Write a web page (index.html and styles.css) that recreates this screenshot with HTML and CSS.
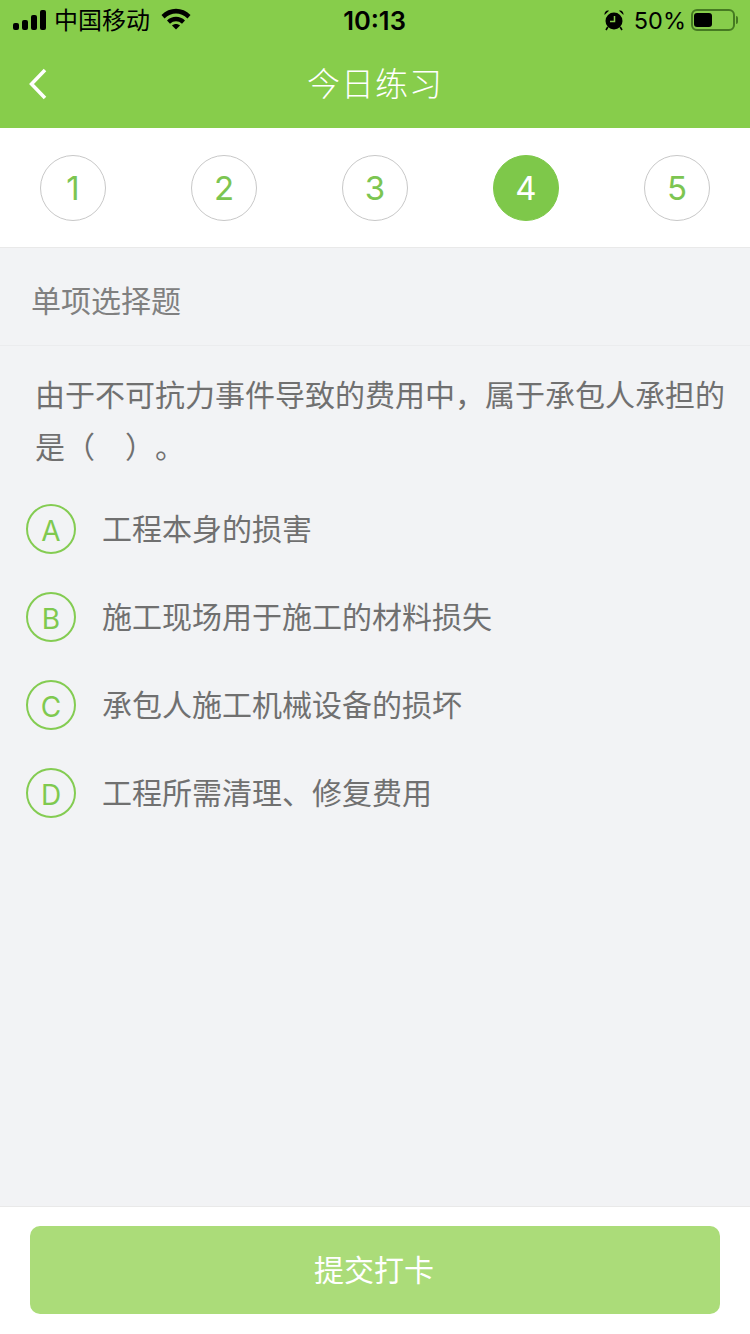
FILE: index.html
```html
<!DOCTYPE html>
<html lang="zh-CN">
  <head>
    <meta charset="UTF-8" />
    <meta name="viewport" content="width=device-width, initial-scale=1.0" />
    <title>今日练习</title>
    <link rel="stylesheet" href="styles.css">
  </head>

  <body>
    <div class="page">
      <div class="header">
        <div class="status-bar">
          <div class="status-left">
            <div class="signal">
              <span class="s1"></span><span class="s2"></span><span class="s3"></span><span class="s4"></span>
            </div>
            <span class="carrier">中国移动</span>
            <svg class="wifi" width="30" height="22" viewBox="0 0 30 22">
              <path d="M0.500 7 C8.500 -1.500 21.500 -1.500 29.500 7 L26.500 10.400 C19.500 3.800 10.500 3.800 3.500 10.400 Z" fill="#000" />
              <path d="M6 12.500 C11 7.500 19 7.500 24 12.500 L21 15.800 C17.500 12.500 12.500 12.500 9 15.800 Z" fill="#000" />
              <path d="M11 17.600 C13.400 15.600 16.600 15.600 19 17.600 L15 21.500 Z" fill="#000" />
            </svg>
          </div>
          <span class="clock">10:13</span>
          <div class="status-right">
            <svg class="alarm" width="22" height="22" viewBox="0 0 22 22">
              <circle cx="11" cy="12" r="8.500" fill="#000" />
              <path d="M11.500 7 V12.500 H7" stroke="#87cd4b" stroke-width="1.500" fill="none" />
              <path d="M1.500 6 L6 1.800 C4 0.800 1.200 2.500 1.500 6 Z M20.500 6 L16 1.800 C18 0.800 20.800 2.500 20.500 6 Z" fill="#000" />
              <path d="M4.800 18 L3 21 M17.200 18 L19 21" stroke="#000" stroke-width="1.600" />
            </svg>
            <span class="percent">50%</span>
            <div class="battery"><div class="battery-level"></div></div>
            <div class="battery-tip"></div>
          </div>
        </div>
        <div class="nav-bar">
          <svg class="back" width="20" height="32" viewBox="0 0 20 32">
            <path d="M17 2 L3.500 16 L17 30" stroke="#fff" stroke-width="3.500" fill="none" />
          </svg>
          <span class="nav-title">今日练习</span>
        </div>
      </div>

      <div class="steps">
        <div class="step">1</div>
        <div class="step">2</div>
        <div class="step">3</div>
        <div class="step active">4</div>
        <div class="step">5</div>
      </div>

      <div class="section-title">单项选择题</div>

      <div class="content">
        <p class="question">由于不可抗力事件导致的费用中，属于承包人承担的是（　）。</p>
        <div class="option"><span class="letter">A</span><span class="option-text">工程本身的损害</span></div>
        <div class="option"><span class="letter">B</span><span class="option-text">施工现场用于施工的材料损失</span></div>
        <div class="option"><span class="letter">C</span><span class="option-text">承包人施工机械设备的损坏</span></div>
        <div class="option"><span class="letter">D</span><span class="option-text">工程所需清理、修复费用</span></div>
      </div>

      <div class="footer">
        <button class="submit">提交打卡</button>
      </div>
    </div>
  </body>
</html>
```

FILE: styles.css
```css
* {
  box-sizing: border-box;
}

body {
  margin: 0;
  font-family: "Liberation Sans", "Noto Sans CJK SC", sans-serif;
  background-color: #f2f3f5;
}

.page {
  display: flex;
  flex-direction: column;
  width: 750px;
  height: 1334px;
  overflow: hidden;
}

/* Green top area */
.header {
  height: 128px;
  background-color: #87cd4b;
}

.status-bar {
  display: flex;
  align-items: center;
  justify-content: space-between;
  height: 40px;
  padding: 0 12px 0 13px;
  color: #000;
}

.status-left,
.status-right {
  display: flex;
  align-items: center;
  width: 260px;
}

.status-right {
  justify-content: flex-end;
}

.signal {
  display: flex;
  align-items: flex-end;
  gap: 3px;
  height: 20px;
}

.signal span {
  width: 6px;
  background-color: #000;
  border-radius: 2px;
}

.signal .s1 { height: 7px; }
.signal .s2 { height: 10px; }
.signal .s3 { height: 15px; }
.signal .s4 { height: 20px; }

.carrier {
  margin: -3px 0 0 8px;
  font-size: 24px;
}

.wifi {
  margin: -2px 0 0 11px;
}

.clock {
  margin-right: 2px;
  font-family: Inter, sans-serif;
  font-size: 25.500px;
  font-weight: 600;
}

.percent {
  margin-left: 9px;
  font-family: Inter, sans-serif;
  font-size: 23.500px;
  font-weight: 400;
}

.battery {
  width: 44px;
  height: 22px;
  margin-left: 5px;
  padding: 2px 1px;
  border: 2px solid #467a22;
  border-radius: 6px;
}

.battery-level {
  width: 18px;
  height: 100%;
  background-color: #000;
  border-radius: 3px;
}

.battery-tip {
  width: 2px;
  height: 8px;
  margin-left: 1px;
  background-color: #467a22;
  border-radius: 0 2px 2px 0;
}

.nav-bar {
  display: flex;
  align-items: center;
  justify-content: center;
  position: relative;
  height: 88px;
}

.back {
  position: absolute;
  left: 28px;
  top: 28px;
}

.nav-title {
  margin-top: -4px;
  color: #fff;
  font-size: 33px;
  font-weight: 300;
  letter-spacing: 1px;
}

/* Question number row */
.steps {
  display: flex;
  align-items: center;
  justify-content: space-between;
  height: 120px;
  padding: 0 40px;
  background-color: #fff;
  border-bottom: 1px solid #e9e9e9;
}

.step {
  display: flex;
  align-items: center;
  justify-content: center;
  width: 66px;
  height: 66px;
  color: #7cc551;
  font-family: Inter, sans-serif;
  font-size: 33px;
  font-weight: 400;
  border: 1px solid #c8c8c8;
  border-radius: 50%;
}

.step.active {
  color: #fff;
  background-color: #7ec84a;
  border-color: #7ec84a;
}

.section-title {
  height: 98px;
  padding: 36px 0 0 31px;
  color: #808080;
  font-size: 30px;
  line-height: 36px;
  border-bottom: 1px solid #ebecee;
}

.content {
  flex: 1;
  padding: 24px 0 0 26px;
}

.question {
  margin: 0 0 30px;
  padding: 0 20px 0 9px;
  color: #707070;
  font-size: 30px;
  line-height: 52px;
  text-spacing-trim: space-all;
}

.option {
  display: flex;
  align-items: center;
  height: 50px;
  margin-bottom: 38px;
}

.letter {
  display: flex;
  align-items: center;
  justify-content: center;
  width: 50px;
  height: 50px;
  padding-top: 3px;
  color: #7fc94f;
  font-family: Inter, sans-serif;
  font-size: 28px;
  font-weight: 400;
  border: 2px solid #84cc52;
  border-radius: 50%;
}

.option-text {
  margin: -4px 0 0 26px;
  color: #707070;
  font-size: 30px;
}

/* Bottom submit bar */
.footer {
  height: 128px;
  padding: 19px 30px;
  background-color: #fff;
  border-top: 1px solid #e9e9e9;
}

.submit {
  display: block;
  width: 690px;
  height: 88px;
  padding: 0 2px 4px 0;
  color: #fff;
  font-family: inherit;
  font-size: 30px;
  background-color: #abdc79;
  border: none;
  border-radius: 10px;
  cursor: pointer;
}
```
